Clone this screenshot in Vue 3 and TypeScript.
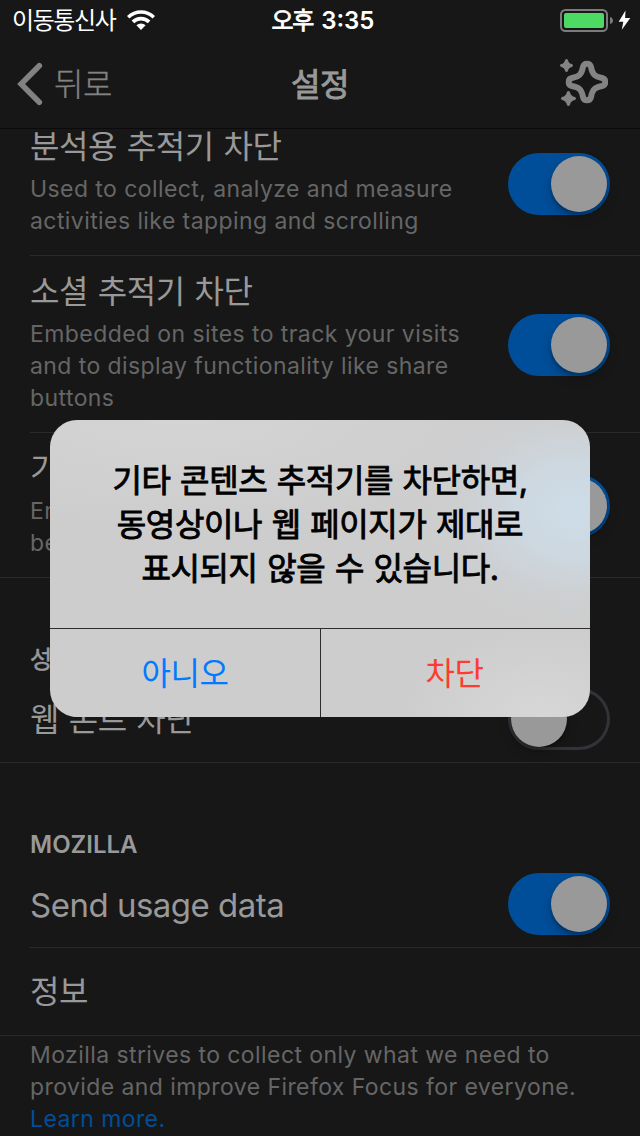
<script setup lang="ts">
interface Row {
  title: string
  lines: string[]
}

const trackers: Row[] = [
  { title: '분석용 추적기 차단', lines: ['Used to collect, analyze and measure', 'activities like tapping and scrolling'] },
  { title: '소셜 추적기 차단', lines: ['Embedded on sites to track your visits', 'and to display functionality like share', 'buttons'] },
  { title: '기타 콘텐츠 추적기 차단', lines: ['Enabling this may cause some pages', 'behave unexpectedly'] },
]

const message: string[] = ['기타 콘텐츠 추적기를 차단하면,', '동영상이나 웹 페이지가 제대로', '표시되지 않을 수 있습니다.']
</script>

<template>
  <div class="screen">
    <div class="status">
      <div class="carrier">
        <span class="carrier-name">이동통신사</span>
        <svg class="wifi" width="30" height="22" viewBox="-15 -21 30 22" fill="#fff">
          <path d="M-14-14.1A19.9 19.9 0 0 1 14-14.1L11.6-11.5A16.3 16.3 0 0 0-11.6-11.5Z" />
          <path d="M-9.4-9.5A13.4 13.4 0 0 1 9.4-9.5L6.8-6.8A9.6 9.6 0 0 0-6.8-6.8Z" />
          <path d="M-4.6-4.7A6.6 6.6 0 0 1 4.6-4.7L0 0Z" />
        </svg>
      </div>
      <div class="clock"><span class="ampm">오후</span><span>3:35</span></div>
      <svg class="battery" width="72" height="24" viewBox="0 0 72 24">
        <rect x="1" y="1" width="46" height="21" rx="4.5" fill="none" stroke="#7b7b7b" stroke-width="2" />
        <rect x="4" y="4" width="40" height="15" rx="2" fill="#4cd964" />
        <path d="M50 8C54 9 54 14 50 15Z" fill="#7b7b7b" />
        <path d="M65.5 1.5L58.7 12.7H63.3L61.8 20.8L70.3 8.9H65.1Z" fill="#fff" />
      </svg>
    </div>
    <header class="nav">
      <div class="back">
        <svg width="28" height="44" viewBox="0 0 28 44">
          <path d="M24.3 3.8L6.1 22L24.3 40.2" fill="none" stroke="#828282" stroke-width="5.6" stroke-linecap="round" />
        </svg>
        <span class="back-label">뒤로</span>
      </div>
      <h1 class="nav-title">설정</h1>
      <svg class="sparkle" width="52" height="52" viewBox="0 0 52 52">
        <path d="M27-15C28-19.4 34-19.4 35-15C36.5-7.5 38.5-5.5 46-4C50.4-3 50.4 3 46 4C38.5 5.5 36.5 7.5 35 15C34 19.4 28 19.4 27 15C25.5 7.5 23.5 5.5 16 4C11.6 3 11.6-3 16-4C23.5-5.5 25.5-7.5 27-15Z" transform="translate(0 26)" fill="none" stroke="#838383" stroke-width="6" />
        <path d="M9.1 4Q10.5 2 11.9 4Q12.6 7.6 16 8.1Q18 9.5 16 10.9Q12.6 11.5 11.9 15Q10.5 17 9.1 15Q8.4 11.5 5 10.9Q3 9.5 5 8.1Q8.4 7.6 9.1 4Z" fill="#838383" />
        <path d="M10.9 36Q12.4 34 13.9 36Q14.7 40.2 19 41Q21 42.5 19 44Q14.7 44.8 13.9 49Q12.4 51 10.9 49Q10.1 44.8 6 44Q4 42.5 6 41Q10.1 40.2 10.9 36Z" fill="#838383" />
      </svg>
    </header>
    <main class="viewport">
      <div class="list">
        <section v-for="(row, i) in trackers" :key="row.title" class="row" :class="i === 2 ? 'full' : 'inset'">
          <div class="copy">
            <div class="title">{{ row.title }}</div>
            <div v-for="line in row.lines" :key="line" class="line">{{ line }}</div>
          </div>
          <div class="toggle on"><i></i></div>
        </section>
        <h2 class="heading">성능</h2>
        <section class="row short full">
          <div class="title">웹 폰트 차단</div>
          <div class="toggle"><i></i></div>
        </section>
        <h2 class="heading latin">MOZILLA</h2>
        <section class="row short inset">
          <div class="title usage">Send usage data</div>
          <div class="toggle on"><i></i></div>
        </section>
        <section class="row short full">
          <div class="title about">정보</div>
        </section>
        <footer class="note">
          <div class="line">Mozilla strives to collect only what we need to</div>
          <div class="line">provide and improve Firefox Focus for everyone.</div>
          <div class="line link">Learn more.</div>
        </footer>
      </div>
    </main>
    <div class="alert" role="alertdialog">
      <div class="message">
        <div v-for="line in message" :key="line">{{ line }}</div>
      </div>
      <div class="actions">
        <button class="action">아니오</button>
        <button class="action danger">차단</button>
      </div>
    </div>
  </div>
</template>

<style>
body {
  background: #171717;
}
</style>

<style scoped>
.screen {
  position: relative;
  width: 640px;
  height: 1136px;
  overflow: hidden;
  display: flex;
  flex-direction: column;
  background: #171717;
  color: #999;
  font-family: Inter, "Noto Sans CJK KR", sans-serif;
}
.status {
  height: 40px;
  flex: none;
  display: grid;
  grid-template-columns: 1fr auto 1fr;
  align-items: center;
  color: #fff;
}
.carrier {
  display: flex;
  align-items: center;
  padding-left: 12px;
}
.carrier-name {
  width: 114px;
  padding-top: 2px;
  font-size: 24px;
  letter-spacing: -1.4px;
  line-height: 38px;
  white-space: nowrap;
}
.clock {
  display: flex;
  gap: 8px;
  padding: 1px 0 0 6px;
  font-size: 24px;
  font-weight: 600;
  line-height: 39px;
}
.ampm {
  font-weight: 400;
  letter-spacing: -1.3px;
  -webkit-text-stroke: 0.8px #fff;
}
.battery {
  justify-self: end;
  margin: 2px 8px 0 0;
}
.nav {
  height: 89px;
  box-sizing: border-box;
  flex: none;
  display: grid;
  grid-template-columns: 1fr auto 1fr;
  align-items: center;
  border-bottom: 1px solid #0b0b0b;
}
.back {
  display: flex;
  align-items: center;
  padding-left: 15px;
}
.back-label {
  margin-left: 11px;
  padding-top: 2px;
  font-size: 32px;
  font-weight: 300;
  letter-spacing: -0.4px;
  line-height: 42px;
  color: #828282;
  -webkit-text-stroke: 0.3px #828282;
}
.nav-title {
  margin: 0;
  padding-top: 2px;
  font-size: 32px;
  font-weight: 400;
  letter-spacing: -0.4px;
  -webkit-text-stroke: 0.9px #999;
  line-height: 42px;
}
.sparkle {
  justify-self: end;
  margin: -4px 32px 0 0;
}
.viewport {
  flex: 1;
  min-height: 0;
  overflow: hidden;
}
.list {
  margin-top: -18px;
}
.row {
  display: flex;
  justify-content: space-between;
  align-items: center;
  box-sizing: border-box;
  padding-right: 30px;
  border-bottom: 1px solid #2a2a2b;
}
.inset {
  margin-left: 30px;
}
.full {
  padding-left: 30px;
}
.short {
  height: 88px;
}
.copy {
  padding: 16px 0 18px;
}
.copy .title {
  margin-bottom: 6px;
}
.title {
  font-size: 32px;
  line-height: 40px;
  letter-spacing: -0.4px;
  word-spacing: 1px;
  white-space: nowrap;
}
.short .title {
  padding-top: 2px;
}
.short .usage {
  padding-top: 3px;
  font-size: 33px;
  letter-spacing: -0.5px;
  word-spacing: 0;
}
.short .about {
  padding-top: 0;
}
.line {
  font-size: 23px;
  line-height: 32px;
  letter-spacing: 0.42px;
  white-space: nowrap;
  color: #666;
}
.toggle {
  flex: none;
  width: 102px;
  height: 62px;
  box-sizing: border-box;
  padding: 3px;
  margin-top: 2px;
  border-radius: 31px;
  display: flex;
  box-shadow: inset 0 0 0 3px #303338;
}
.short .toggle {
  margin-top: 0;
}
.toggle i {
  width: 56px;
  height: 56px;
  border-radius: 50%;
  background: #999;
  box-shadow: 0 5px 12px rgba(0, 0, 0, 0.22), 0 3px 3px rgba(0, 0, 0, 0.18);
}
.on {
  justify-content: flex-end;
  background: #004e99;
  box-shadow: none;
}
.heading {
  height: 97px;
  margin: 0;
  padding: 66px 0 0 30px;
  box-sizing: border-box;
  font-size: 24px;
  font-weight: 400;
  line-height: 32px;
  -webkit-text-stroke: 0.6px #999;
}
.latin {
  font-weight: 600;
  -webkit-text-stroke: 0;
}
.note {
  padding: 3px 0 0 30px;
}
.link {
  color: #004e99;
}
.alert {
  position: absolute;
  left: 50px;
  top: 420px;
  width: 540px;
  height: 297px;
  border-radius: 27px;
  overflow: hidden;
  display: flex;
  flex-direction: column;
  background:
    radial-gradient(ellipse 170px 135px at 525px 90px, #cddde9 0%, rgba(205, 220, 231, 0.7) 35%, rgba(205, 210, 215, 0.25) 70%, rgba(205, 205, 205, 0) 100%),
    radial-gradient(ellipse 140px 90px at 490px 297px, #d7d7d7, rgba(205, 205, 205, 0)),
    radial-gradient(ellipse 360px 110px at 130px 0, #d4d4d4, rgba(205, 205, 205, 0)),
    #cdcdcd;
}
.message {
  height: 208px;
  box-sizing: border-box;
  padding-top: 39px;
  text-align: center;
  font-size: 32px;
  line-height: 44px;
  letter-spacing: -0.4px;
  word-spacing: 1px;
  color: #000;
  -webkit-text-stroke: 0.9px #000;
}
.actions {
  flex: 1;
  display: grid;
  grid-template-columns: 270px 270px;
  border-top: 1px solid #2b2d30;
}
.action {
  border: 0;
  padding: 0 0 4px;
  background: none;
  font: inherit;
  font-size: 32px;
  letter-spacing: -0.4px;
  color: #007aff;
}
.danger {
  border-left: 1px solid #2b2d30;
  padding-right: 2px;
  color: #ff3b30;
}
</style>
